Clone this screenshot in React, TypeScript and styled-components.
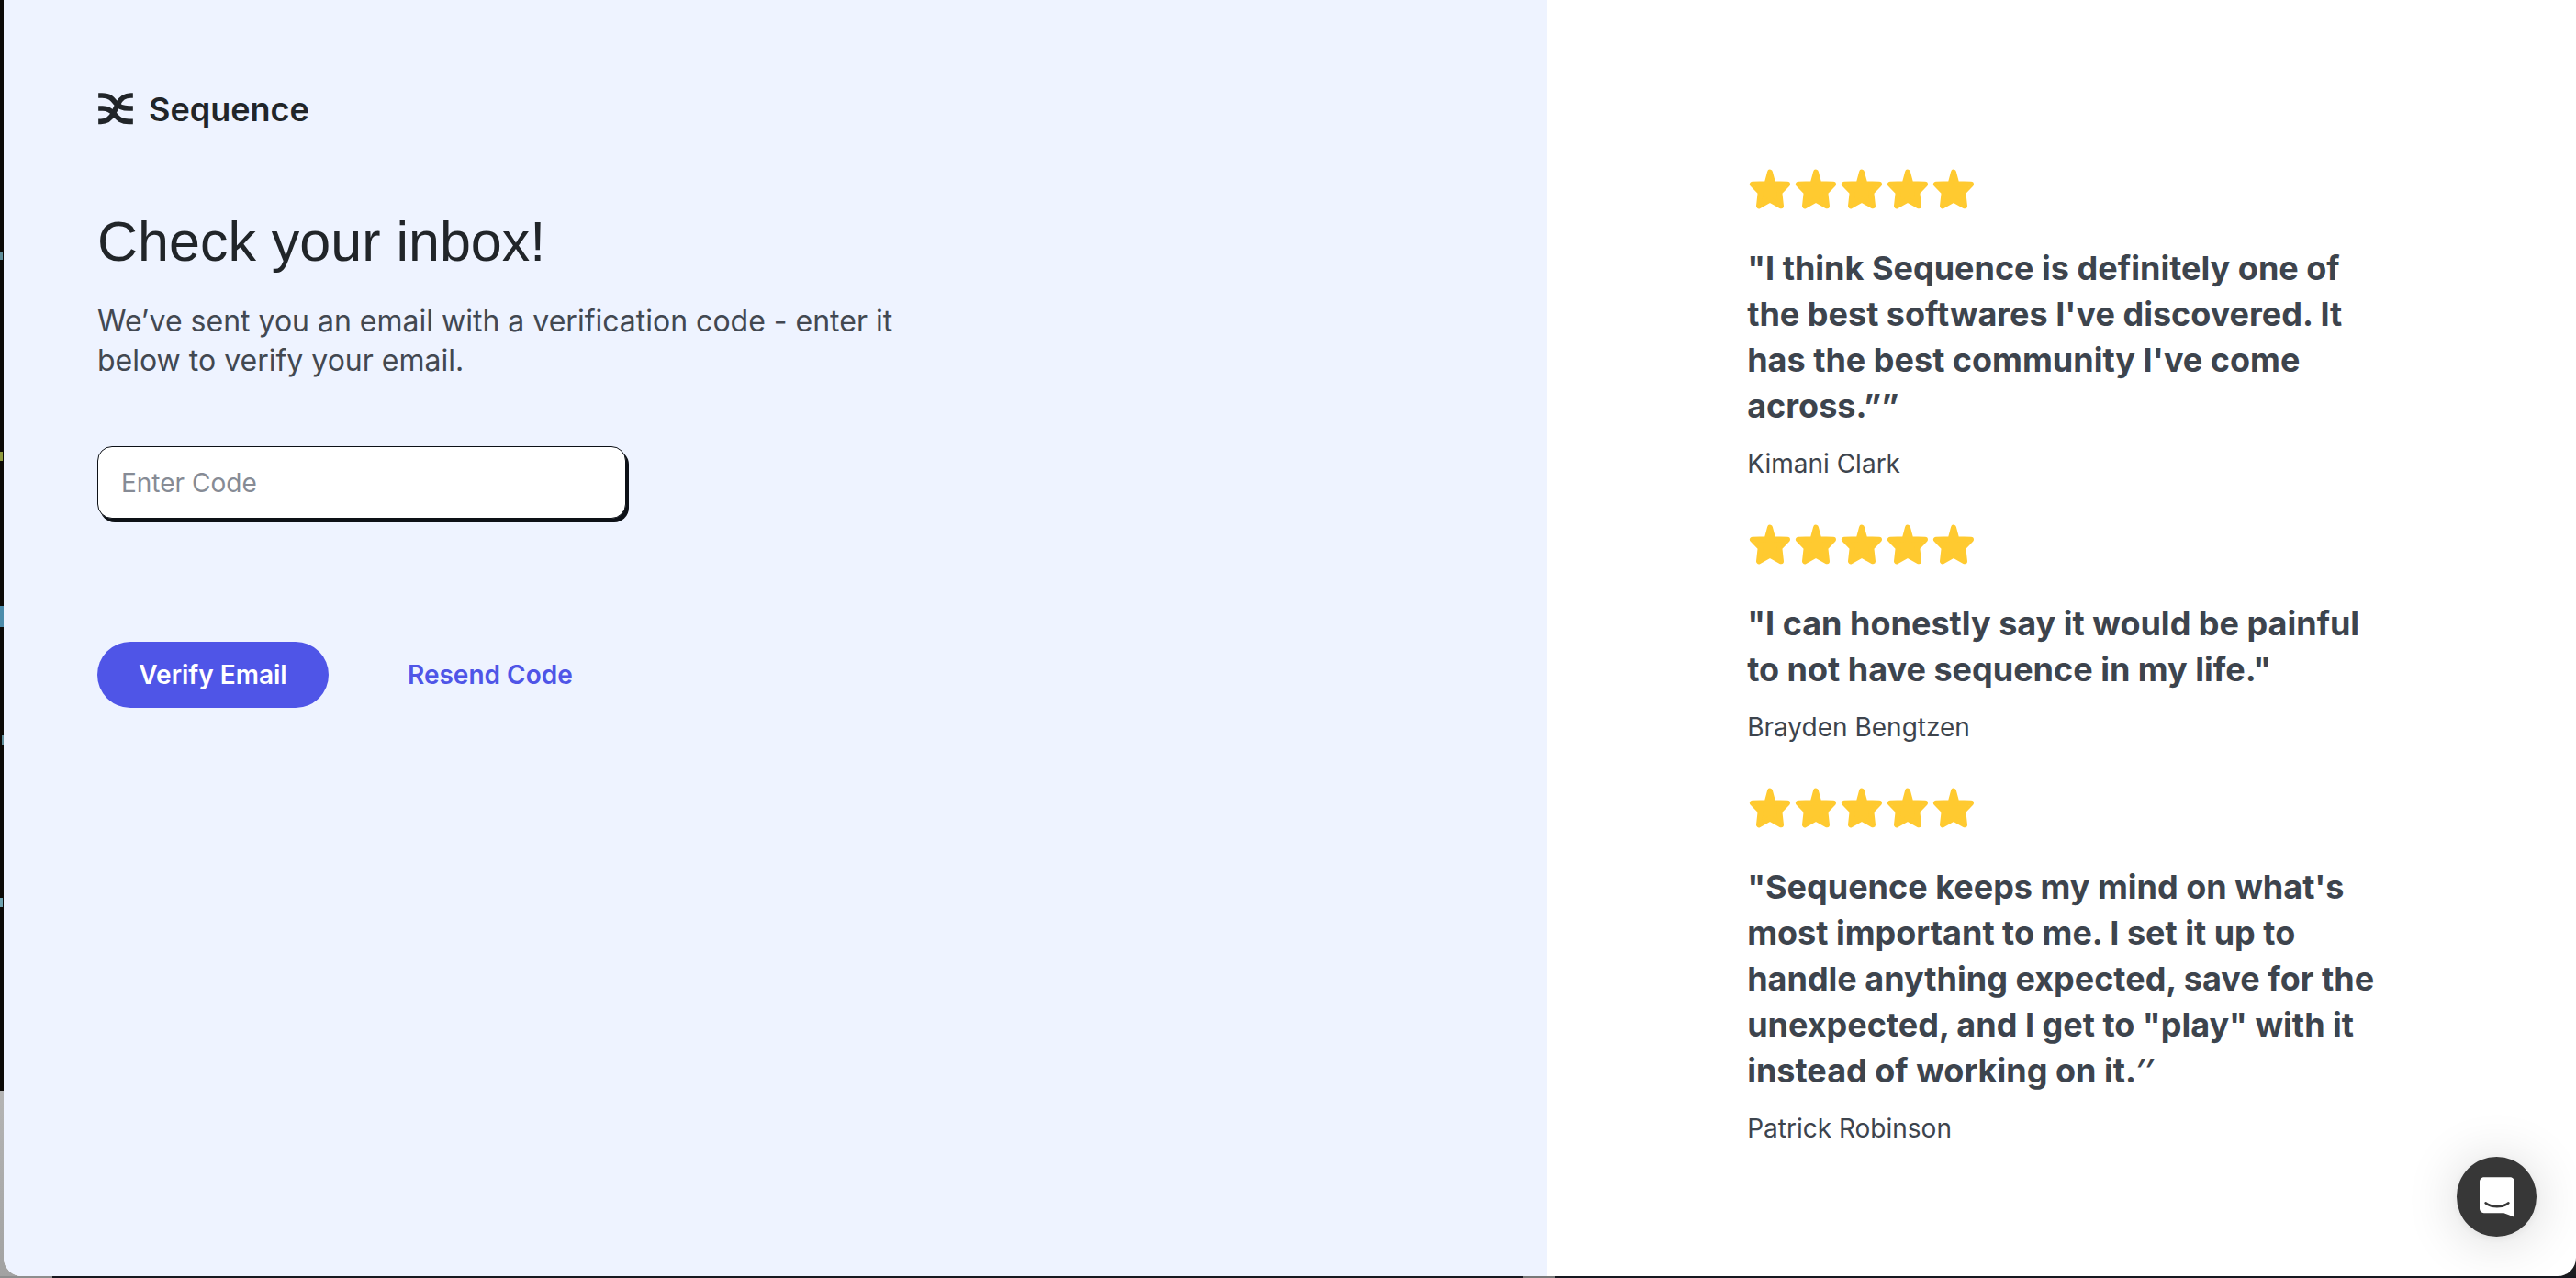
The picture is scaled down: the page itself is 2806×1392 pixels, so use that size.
import React from 'react';
import styled, { createGlobalStyle } from 'styled-components';

const GlobalStyle = createGlobalStyle`
  *, *::before, *::after {
    box-sizing: border-box;
  }
  body {
    margin: 0;
    font-family: Inter, 'Liberation Sans', sans-serif;
    color: #3d444d;
  }
  h1, p, blockquote, figure {
    margin: 0;
  }
  button, input {
    font-family: inherit;
  }
`;

/* The desktop that peeks out around the rounded window. */
const Desktop = styled.div`
  display: flex;
  min-height: 100vh;
  padding: 0 0 2px 4px;
  background:
    linear-gradient(
        90deg,
        #8d8e8e 0 57px,
        #17181f 57px 1659px,
        #777878 1659px 1694px,
        #17181f 1694px
      )
      left bottom / 100% 2px no-repeat,
    linear-gradient(#4c8cab, #4c8cab) 0 660px / 4px 23px no-repeat,
    linear-gradient(#5f8d99, #5f8d99) 0 274px / 3px 9px no-repeat,
    linear-gradient(#8f9a3f, #8f9a3f) 0 492px / 3px 10px no-repeat,
    linear-gradient(#5f8d99, #5f8d99) 2px 801px / 2px 11px no-repeat,
    linear-gradient(#6fa3b0, #6fa3b0) 0 978px / 3px 10px no-repeat,
    linear-gradient(180deg, #0c0a07 0 1188px, #b4b4b4 1188px, #a2a2a2) left top / 24px 100% no-repeat,
    #1c1c1f;
`;

const Window = styled.div`
  flex: 1;
  display: grid;
  grid-template-columns: 3fr 2fr;
  overflow: hidden;
  border-radius: 0 0 20px 20px;
  background: #ffffff;
`;

const FormPane = styled.main`
  padding: 97px 102px 60px;
  background: #eef3ff;
`;

const Brand = styled.div`
  display: flex;
  align-items: center;
  gap: 16px;
  color: #212529;
`;

const BrandMark = styled.svg`
  width: 40px;
  height: 36px;
  fill: none;
  stroke: currentColor;
  stroke-width: 17;
`;

const BrandName = styled.span`
  font-size: 36px;
  line-height: 44px;
  font-weight: 600;
`;

const Title = styled.h1`
  margin-top: 86px;
  font-family: 'Liberation Sans', Arial, sans-serif;
  font-size: 61px;
  line-height: 72px;
  font-weight: 400;
  color: #212529;
`;

const Lead = styled.p`
  max-width: 900px;
  margin-top: 29px;
  font-size: 32px;
  line-height: 43px;
  color: #424851;
`;

const CodeForm = styled.form`
  margin-top: 72px;
`;

const CodeInput = styled.input`
  display: block;
  width: 100%;
  max-width: 576px;
  height: 79px;
  padding: 0 25px;
  border: 1px solid #0d1117;
  border-radius: 16px;
  background: #ffffff;
  box-shadow: 3px 4px 0 #0d1117;
  font-size: 28px;
  color: #212529;
  outline: none;

  &::placeholder {
    color: #868b95;
    opacity: 1;
  }
`;

const Actions = styled.div`
  display: flex;
  flex-wrap: wrap;
  gap: 42px;
  margin-top: 134px;
`;

const Button = styled.button<{ $primary?: boolean }>`
  min-width: 252px;
  height: 72px;
  padding: 0 44px;
  border: 0;
  border-radius: 36px;
  background: ${({ $primary }) => ($primary ? '#4f55e7' : 'transparent')};
  color: ${({ $primary }) => ($primary ? '#ffffff' : '#4f55e7')};
  font-size: 28px;
  font-weight: 600;
  cursor: pointer;
`;

const ReviewPane = styled.aside`
  display: flex;
  flex-direction: column;
  gap: 43px;
  padding: 181px 200px 60px 218px;
`;

const Review = styled.figure`
  display: flex;
  flex-direction: column;
  max-width: 700px;
`;

const Stars = styled.div`
  display: flex;
`;

const StarIcon = styled.svg`
  width: 50px;
  height: 50px;
  fill: #ffca30;
  stroke: #ffca30;
  stroke-width: 18;
  stroke-linejoin: round;
`;

const Quote = styled.blockquote`
  margin-top: 36px;
  font-size: 36px;
  line-height: 50px;
  font-weight: 700;
`;

const Prime = styled.span`
  display: inline-block;
  font-family: 'Noto Sans', sans-serif;
  font-weight: 600;
`;

const Author = styled.figcaption`
  margin-top: 18px;
  font-size: 28px;
  line-height: 40px;
`;

const Launcher = styled.button`
  position: fixed;
  right: 43px;
  bottom: 45px;
  display: flex;
  align-items: center;
  justify-content: center;
  width: 87px;
  height: 87px;
  padding: 0;
  border: 0;
  border-radius: 50%;
  background: #373737;
  box-shadow: 0 2px 11px rgba(0, 0, 0, 0.06), 0 4px 58px rgba(0, 0, 0, 0.16);
  cursor: pointer;
`;

const ChatIcon = styled.svg`
  width: 38px;
  height: 44px;
  fill: #ffffff;
`;

interface ReviewData {
  author: string;
  text: React.ReactNode;
}

const reviews: ReviewData[] = [
  {
    author: 'Kimani Clark',
    text: '"I think Sequence is definitely one of the best softwares I\'ve discovered. It has the best community I\'ve come across.””',
  },
  {
    author: 'Brayden Bengtzen',
    text: '"I can honestly say it would be painful to not have sequence in my life."',
  },
  {
    author: 'Patrick Robinson',
    text: (
      <>
        "Sequence keeps my mind on what's most important to me. I set it up to handle anything
        expected, save for the unexpected, and I get to "play" with it instead of working on it.
        <Prime>′′</Prime>
      </>
    ),
  },
];

function Rating() {
  return (
    <Stars role="img" aria-label="5 out of 5 stars">
      {[1, 2, 3, 4, 5].map((n) => (
        <StarIcon key={n} viewBox="12 19 150 150" aria-hidden="true">
          <path d="M87 39 97 77 144 78 118 105 123 149 87 129 51 149 56 105 30 78 77 77Z" />
        </StarIcon>
      ))}
    </Stars>
  );
}

export default function App() {
  return (
    <>
      <GlobalStyle />
      <Desktop>
        <Window>
          <FormPane>
            <Brand>
              <BrandMark viewBox="-3 0 119 108" aria-hidden="true">
                <path d="M0 9H12C38 9 46 20 56 33S80 51 100 51H113" />
                <path d="M113 9H106C84 9 74 18 65 35L49 67C40 84 28 94 8 94H0" />
                <path d="M0 51H14C34 51 44 60 54 72S74 94 100 94H113" />
              </BrandMark>
              <BrandName>Sequence</BrandName>
            </Brand>
            <Title>Check your inbox!</Title>
            <Lead>
              We’ve sent you an email with a verification code - enter it below to verify your
              email.
            </Lead>
            <CodeForm onSubmit={(event) => event.preventDefault()}>
              <CodeInput type="text" placeholder="Enter Code" aria-label="Enter Code" />
              <Actions>
                <Button $primary type="submit">
                  Verify Email
                </Button>
                <Button type="button">Resend Code</Button>
              </Actions>
            </CodeForm>
          </FormPane>
          <ReviewPane>
            {reviews.map((review) => (
              <Review key={review.author}>
                <Rating />
                <Quote>{review.text}</Quote>
                <Author>{review.author}</Author>
              </Review>
            ))}
          </ReviewPane>
        </Window>
        <Launcher type="button" aria-label="Open chat">
          <ChatIcon viewBox="0 0 28 32" aria-hidden="true">
            <path d="M28 32s-4.714-1.855-8.527-3.34H3.437C1.54 28.66 0 27.026 0 25.013V3.644C0 1.633 1.54 0 3.437 0h21.125c1.898 0 3.437 1.632 3.437 3.645v18.404H28V32zm-4.139-11.982a.88.88 0 00-1.292-.105c-.03.026-3.015 2.681-8.57 2.681-5.486 0-8.517-2.636-8.571-2.684a.88.88 0 00-1.29.107 1.01 1.01 0 00-.219.708.992.992 0 00.318.664c.142.128 3.537 3.15 9.762 3.15 6.226 0 9.621-3.022 9.763-3.15a.992.992 0 00.317-.664 1.01 1.01 0 00-.218-.707z" />
          </ChatIcon>
        </Launcher>
      </Desktop>
    </>
  );
}
